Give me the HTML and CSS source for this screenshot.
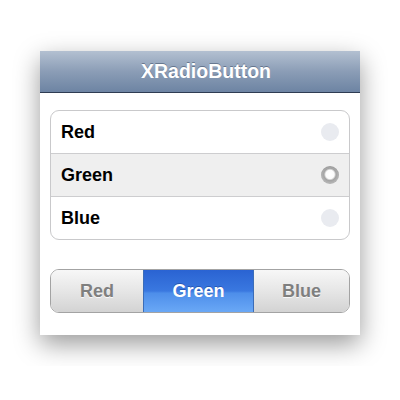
FILE: index.html
```html
<!DOCTYPE html>
<html>
<head>
<meta charset="utf-8">
<link rel="stylesheet" href="styles.css">
</head>
<body>
<div class="stage">
  <div class="window">
    <div class="navbar"><span class="title">XRadioButton</span></div>
    <div class="content">
      <div class="group">
        <div class="row"><span class="label">Red</span><span class="radio"></span></div>
        <div class="row selected"><span class="label">Green</span><span class="radio on"></span></div>
        <div class="row"><span class="label">Blue</span><span class="radio"></span></div>
      </div>
      <div class="segmented">
        <div class="seg seg-red">Red</div>
        <div class="seg seg-green active">Green</div>
        <div class="seg seg-blue">Blue</div>
      </div>
    </div>
  </div>
</div>
</body>
</html>
```

FILE: styles.css
```css
html, body {
  margin: 0;
  padding: 0;
  background: #ffffff;
}
body {
  font-family: "Liberation Sans", Arial, sans-serif;
}
.stage {
  margin: 22px 0 0 12px;
  width: 376px;
  height: 344px;
  padding: 29px 28px 0;
  box-sizing: border-box;
  overflow: hidden;
}
.window {
  width: 320px;
  height: 284px;
  background: #ffffff;
  box-shadow: 0 9px 24px rgba(0, 0, 0, 0.4);
  display: flex;
  flex-direction: column;
}
.navbar {
  height: 41px;
  border-bottom: 1px solid #2e3c52;
  background: linear-gradient(to bottom, #b3c0d1 0%, #8b9db6 50%, #6d84a3 100%);
  display: flex;
  align-items: center;
  justify-content: center;
  padding-left: 12px;
}
.title {
  color: #ffffff;
  font-size: 19.5px;
  font-weight: bold;
  text-shadow: 0 -1px 0 rgba(40, 55, 80, 0.45);
  margin-top: -1px;
}
.content {
  padding: 17px 10px 0;
  display: flex;
  flex-direction: column;
}
.group {
  border: 1px solid #c9c9cb;
  border-radius: 9px;
  overflow: hidden;
  background: #ffffff;
}
.row {
  height: 42px;
  display: flex;
  align-items: center;
  justify-content: space-between;
  padding: 0 10px 0 10px;
}
.row + .row {
  border-top: 1px solid #cdcdcf;
}
.row.selected {
  background: #efefef;
}
.label {
  font-size: 18px;
  font-weight: bold;
  color: #000000;
}
.radio {
  width: 18px;
  height: 18px;
  border-radius: 50%;
  background: #e9ebf0;
  box-sizing: border-box;
}
.radio.on {
  background: radial-gradient(circle closest-side at 50% 47%, #ffffff 0%, #fbfbfb 50%, #dcdcdc 58%, #a4a4a4 72%, #b4b4b4 100%);
  box-shadow: inset 0 1px 1px rgba(0, 0, 0, 0.12);
}
.segmented {
  margin-top: 29px;
  height: 44px;
  display: flex;
  border: 1px solid #a3a3a3;
  border-radius: 9px;
  overflow: hidden;
  box-sizing: border-box;
}
.seg {
  display: flex;
  align-items: center;
  justify-content: center;
  font-size: 18px;
  font-weight: bold;
  color: #7f7f7f;
  text-shadow: 0 1px 0 rgba(255, 255, 255, 0.8);
  background: linear-gradient(to bottom, #f7f7f7 0%, #e6e6e6 50%, #d3d3d3 100%);
}
.seg-red {
  width: 92px;
}
.seg-green {
  width: 111px;
}
.seg-blue {
  flex: 1;
}
.seg.active {
  color: #ffffff;
  text-shadow: 0 -1px 0 rgba(20, 60, 140, 0.5);
  background: linear-gradient(to bottom, #2a63d2 0%, #3a78e0 50%, #4d8eea 55%, #6aa8f6 100%);
  border-left: 1px solid #3b6db8;
  border-right: 1px solid #3b6db8;
  box-sizing: border-box;
}
```
